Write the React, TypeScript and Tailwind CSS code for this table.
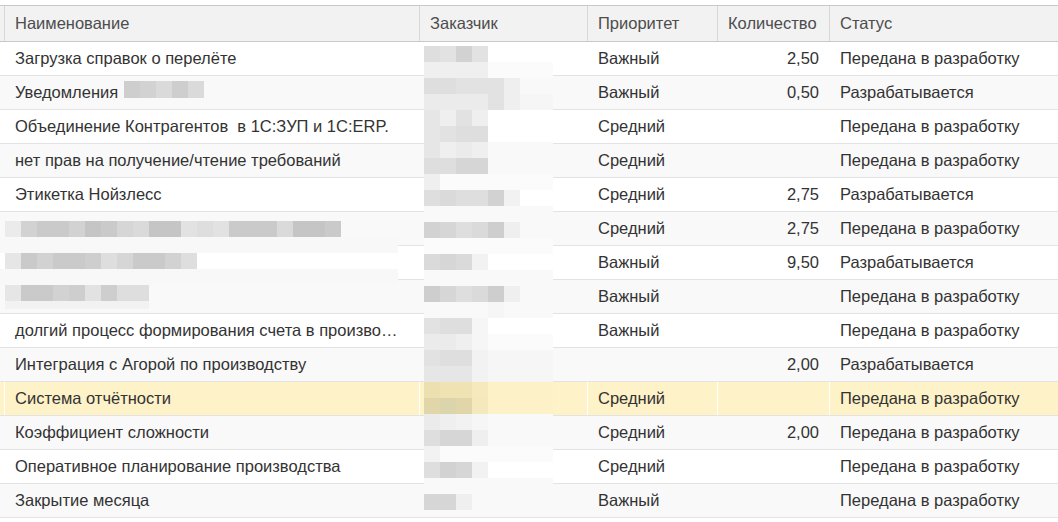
import React from "react";

type Row = {
  name: string;
  priority: string;
  qty: string;
  status: string;
};

const rows: Row[] = [
  { name: "Загрузка справок о перелёте", priority: "Важный", qty: "2,50", status: "Передана в разработку" },
  { name: "Уведомления", priority: "Важный", qty: "0,50", status: "Разрабатывается" },
  { name: "Объединение Контрагентов  в 1С:ЗУП и 1С:ERP.", priority: "Средний", qty: "", status: "Передана в разработку" },
  { name: "нет прав на получение/чтение требований", priority: "Средний", qty: "", status: "Передана в разработку" },
  { name: "Этикетка Нойзлесс", priority: "Средний", qty: "2,75", status: "Разрабатывается" },
  { name: "", priority: "Средний", qty: "2,75", status: "Передана в разработку" },
  { name: "", priority: "Важный", qty: "9,50", status: "Разрабатывается" },
  { name: "", priority: "Важный", qty: "", status: "Передана в разработку" },
  { name: "долгий процесс формирования счета в произво…", priority: "Важный", qty: "", status: "Передана в разработку" },
  { name: "Интеграция с Агорой по производству", priority: "", qty: "2,00", status: "Разрабатывается" },
  { name: "Система отчётности", priority: "Средний", qty: "", status: "Передана в разработку" },
  { name: "Коэффициент сложности", priority: "Средний", qty: "2,00", status: "Передана в разработку" },
  { name: "Оперативное планирование производства", priority: "Средний", qty: "", status: "Передана в разработку" },
  { name: "Закрытие месяца", priority: "Важный", qty: "", status: "Передана в разработку" },
];

const SELECTED = 10;

// mosaic shades used for the redacted cells
const shade: Record<string, string> = {
  w: "bg-white",
  z: "bg-[#fbfbfb]",
  y: "bg-[#f9f9f9]",
  x: "bg-[#f6f6f6]",
  v: "bg-[#f2f2f2]",
  u: "bg-[#efefef]",
  t: "bg-[#ebebeb]",
  s: "bg-[#e6e6e6]",
  r: "bg-[#e2e2e2]",
  q: "bg-[#dedede]",
  p: "bg-[#dadada]",
  o: "bg-[#d6d6d6]",
  n: "bg-[#d2d2d2]",
  m: "bg-[#cecece]",
  l: "bg-[#cacaca]",
  k: "bg-[#c5c5c5]",
  A: "bg-[#ecdfb0]",
  B: "bg-[#efe3b4]",
  C: "bg-[#f6e9be]",
  D: "bg-[#fdf1c7]",
  E: "bg-[#e0d6aa]",
  F: "bg-[#dbd5ae]",
  G: "bg-[#f4e8bd]",
  _: "bg-transparent",
};

const customerMosaic = [
  "qrnrwwww",
  "uuuuzzzz",
  "qqrrruyy",
  "ttttruxx",
  "suruwwww",
  "srqqwwww",
  "sutuyyyy",
  "qqooyyyy",
  "uzzzzzzz",
  "qpqqnvww",
  "yyyyyyyy",
  "noqpmuyy",
  "zzzzzzzz",
  "popvwwww",
  "yyyyyyyy",
  "moqpmuyy",
  "yyyyxyyy",
  "rqqxwwww",
  "ttuxzzzz",
  "rqqvxxxx",
  "sssvxxxx",
  "ABBCDDDD",
  "EFEGDDDD",
  "tuvxyyyy",
  "qoouyyyy",
  "vzzzzzzz",
  "qnovwwww",
  "yyyyyyyy",
  "oouyyyyy",
];

function Blocks({ line, h = "h-4" }: { line: string; h?: string }) {
  return (
    <div className="flex">
      {line.split("").map((c, i) => (
        <div key={i} className={`w-4 shrink-0 ${h} ${shade[c]}`} />
      ))}
    </div>
  );
}

function Strip({ line, h = "h-4", fill }: { line: string; h?: string; fill?: string }) {
  return (
    <div className={`flex w-[398px] ${fill ?? ""}`}>
      <div className="w-[5px] shrink-0" />
      <Blocks line={line} h={h} />
    </div>
  );
}

const cols = "grid grid-cols-[4px_415px_168px_130px_112px_1fr]";

export default function App() {
  return (
    <div className="relative h-[522px] w-[1058px] overflow-hidden bg-white pt-[5px] font-['Liberation_Sans',Arial,sans-serif] text-[16.5px] text-[#333]">
      <div className={`${cols} h-[37px] border-y border-[#c9c9c9] bg-[#f2f2f2] text-[#4d4d4d]`}>
        <div />
        <div className="flex items-center border-l border-[#d8d8d8] pl-[10px]">Наименование</div>
        <div className="flex items-center border-l border-[#d8d8d8] pl-[10px]">Заказчик</div>
        <div className="flex items-center border-l border-[#d8d8d8] pl-[10px]">Приоритет</div>
        <div className="flex items-center border-l border-[#d8d8d8] pl-[10px]">Количество</div>
        <div className="flex items-center border-l border-[#d8d8d8] pl-[10px]">Статус</div>
      </div>

      {rows.map((r, i) => {
        const selected = i === SELECTED;
        const bg = selected ? "bg-[#fef2c8]" : i % 2 === 1 ? "bg-[#f9f9f9]" : "bg-white";
        const sep = selected ? "border-white" : "border-transparent";
        return (
          <div key={i} className={`${cols} h-[34px] border-b border-[#e3e3e3] ${bg}`}>
            <div />
            <div className={`flex items-center overflow-hidden whitespace-pre border-l ${sep} pl-[10px]`}>{r.name}</div>
            <div className={`border-l ${sep}`} />
            <div className={`flex items-center border-l ${sep} pl-[10px]`}>{r.priority}</div>
            <div className={`flex items-center justify-end border-l ${sep} pr-[10px]`}>{r.qty}</div>
            <div className={`flex items-center whitespace-nowrap border-l ${sep} pl-[10px]`}>{r.status}</div>
          </div>
        );
      })}

      {/* redacted customer column */}
      <div className="absolute left-[424px] top-[46px] w-[129px] overflow-hidden">
        {customerMosaic.map((line, i) => (
          <div key={i} className="flex">
            <Blocks line={line.slice(0, 7)} />
            <div className={`h-4 w-[17px] ${shade[line[7]]}`} />
          </div>
        ))}
      </div>

      {/* redacted names */}
      <div className="absolute left-[124px] top-[81px]">
        <Blocks line="mnpmp" h="h-[17px]" />
      </div>
      <div className="absolute left-0 top-[221px]">
        <Strip line="tnllnklopkkrqrlllpkkl" />
        <Strip line="" fill="h-4 bg-[#f8f8f8]" />
        <Strip line="slnllmqollnq" />
        <Strip line="" fill="h-4 bg-[#f8f8f8]" />
        <Strip line="sllnmrmqq" />
        <Strip line="vvvvvvvvv" h="h-2" />
      </div>
    </div>
  );
}
